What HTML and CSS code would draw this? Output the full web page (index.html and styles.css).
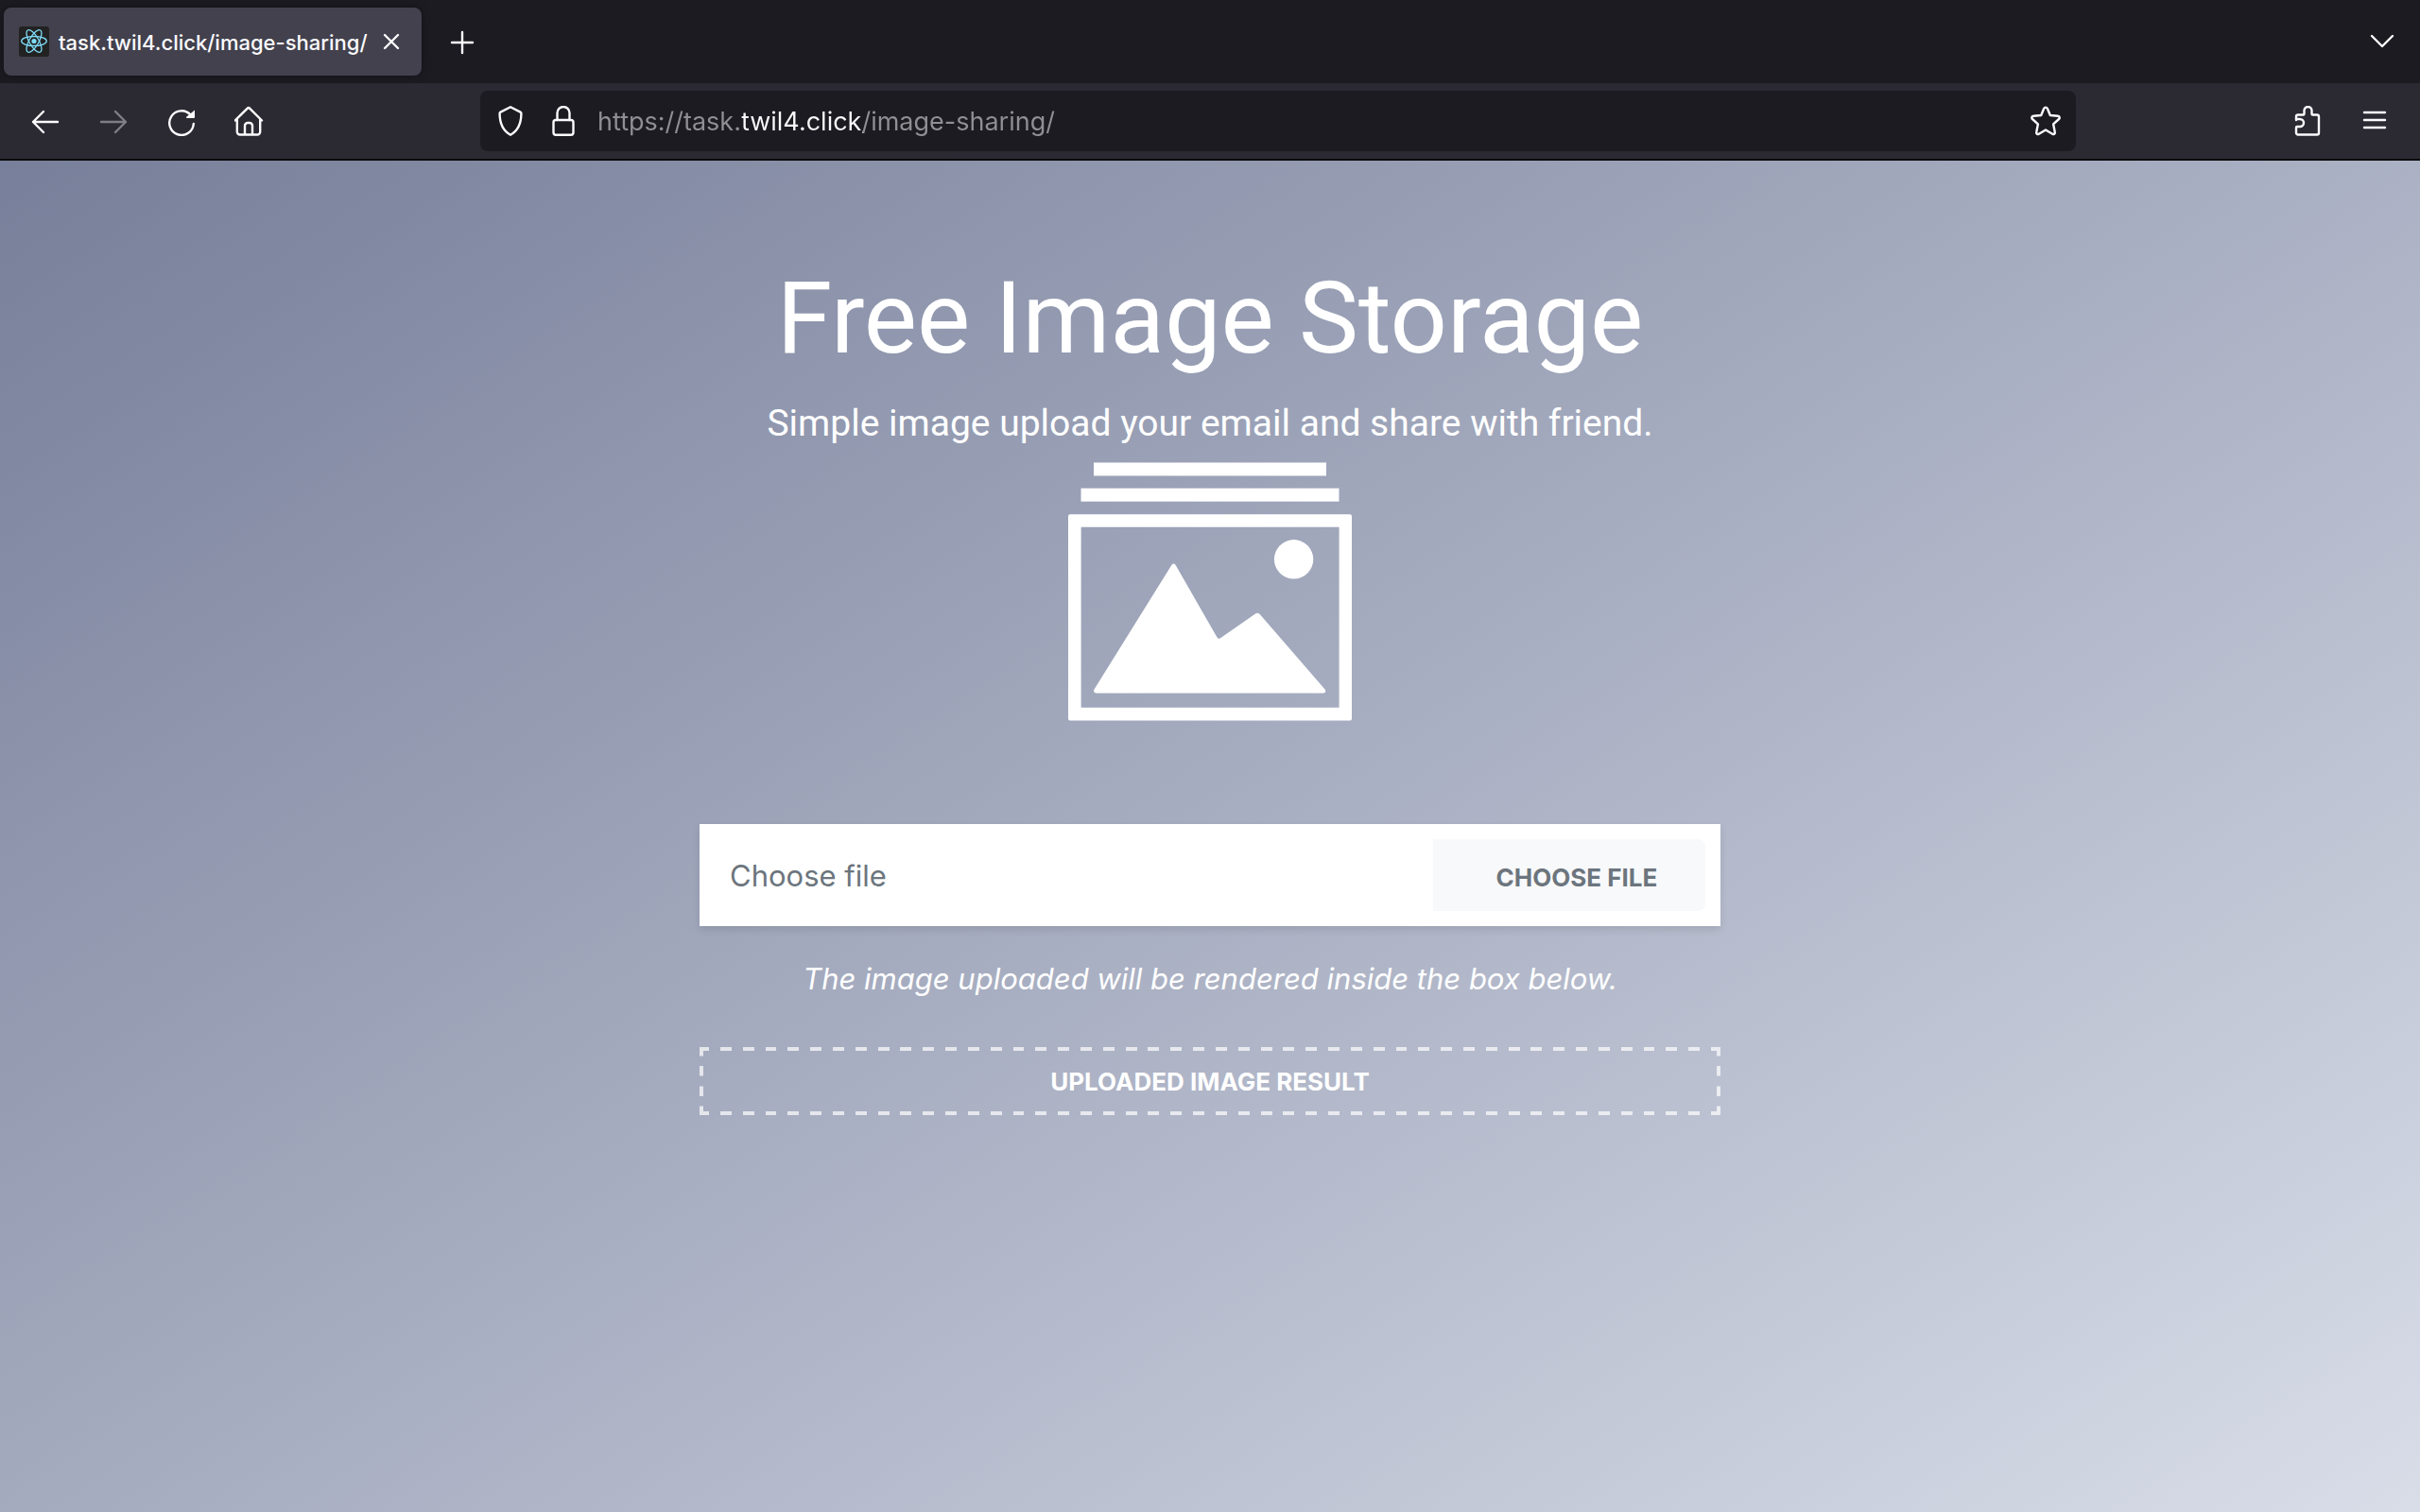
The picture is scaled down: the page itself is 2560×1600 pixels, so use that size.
FILE: index.html
```html
<!DOCTYPE html>
<html lang="en">
<head>
<meta charset="utf-8">
<meta name="viewport" content="width=device-width, initial-scale=1">
<title>Free Image Storage</title>
<link rel="stylesheet" href="styles.css">
</head>
<body>
<div class="browser">
  <header class="chrome">
    <div class="tabstrip">
      <div class="tab">
        <svg class="favicon" viewBox="0 0 32 32" aria-hidden="true">
          <rect width="32" height="32" rx="3" fill="#222"/>
          <g fill="none" stroke="#7fdcf7" stroke-width="1.3">
            <ellipse cx="16" cy="15.5" rx="13.3" ry="5"/>
            <ellipse cx="16" cy="15.5" rx="13.3" ry="5" transform="rotate(60 16 15.5)"/>
            <ellipse cx="16" cy="15.5" rx="13.3" ry="5" transform="rotate(120 16 15.5)"/>
          </g>
          <circle cx="16" cy="15.5" r="2.6" fill="#7fdcf7"/>
        </svg>
        <span class="tab-title">task.twil4.click/image-sharing/</span>
        <button class="tab-close" type="button" aria-label="Close tab">
          <svg class="icon" viewBox="0 0 32 32"><path d="M9 9l14 14M23 9L9 23"/></svg>
        </button>
      </div>
      <button class="tool" type="button" aria-label="New tab">
        <svg class="icon" viewBox="0 0 32 32"><path d="M16 6v22M5 17h22"/></svg>
      </button>
      <button class="tool tool-end" type="button" aria-label="List all tabs">
        <svg class="icon" viewBox="0 0 32 32"><path d="M5 10l11 11 11-11"/></svg>
      </button>
    </div>
    <nav class="toolbar" aria-label="Navigation">
      <button class="tool" type="button" aria-label="Back">
        <svg class="icon" viewBox="0 0 32 32"><path d="M29 17H3M14 6L3 17l11 11"/></svg>
      </button>
      <button class="tool" type="button" aria-label="Forward" disabled>
        <svg class="icon" viewBox="0 0 32 32"><path d="M3 17h26M18 6l11 11-11 11"/></svg>
      </button>
      <button class="tool" type="button" aria-label="Reload">
        <svg class="icon" viewBox="0 0 32 32"><path d="M25.5 9.500A12.800 12.800 0 1 0 28.800 19"/><path class="solid" d="M30 4.500v7.500a1 1 0 0 1-1 1h-7.300a.8.8 0 0 1-.6-1.300z"/></svg>
      </button>
      <button class="tool" type="button" aria-label="Home">
        <svg class="icon" viewBox="0 0 32 32"><path d="M.8 15.500L13.500 2.800a2 2 0 0 1 2.800 0L29 15.500M2.800 14v13.500a3 3 0 0 0 3 3h18.400a3 3 0 0 0 3-3V14M11 30v-9a3 3 0 0 1 3-3h2a3 3 0 0 1 3 3v9"/></svg>
      </button>
      <div class="urlbar">
        <svg class="icon" viewBox="0 0 32 32" role="img" aria-label="Tracking protection"><path d="M16 1.300l10.500 5.300a1.600 1.600 0 0 1 .9 1.500C27.400 19 24 26.500 16 30.700 8 26.500 4.600 19 4.600 8.100a1.600 1.600 0 0 1 .9-1.500z"/></svg>
        <svg class="icon" viewBox="0 0 32 32" role="img" aria-label="Secure connection"><path d="M9.500 15V7.500a6.500 6.500 0 0 1 13 0V15"/><rect x="5.500" y="15" width="21" height="15.700" rx="2.500"/></svg>
        <input class="url" type="text" aria-label="Address" value="https://task.twil4.click/image-sharing/">
        <button class="bookmark" type="button" aria-label="Bookmark this page">
          <svg class="icon" viewBox="0 0 32 32"><path d="M14.200 2.800a2 2 0 0 1 3.600 0l3 7.200 8.200.8a1.800 1.800 0 0 1 1 3.200l-5.900 5.300 1.700 8.600a1.700 1.700 0 0 1-2.600 1.800L16 25.500l-7.200 4.200a1.700 1.700 0 0 1-2.600-1.800l1.700-8.600L2 14a1.800 1.800 0 0 1 1-3.200l8.200-.8z"/></svg>
        </button>
      </div>
      <button class="tool" type="button" aria-label="Extensions">
        <svg class="icon" viewBox="0 0 32 32"><path d="M5 15V11.500a2 2 0 0 1 2-2h5.500a1 1 0 0 0 1-1V5a4 4 0 0 1 8 0v3.500a1 1 0 0 0 1 1H27a2 2 0 0 1 2 2v17a2 2 0 0 1-2 2H7a2 2 0 0 1-2-2v-5.500a1 1 0 0 1 1-1h3a3.500 3.500 0 0 0 0-8H5z"/></svg>
      </button>
      <button class="tool" type="button" aria-label="Open application menu">
        <svg class="icon" viewBox="0 0 32 32"><path d="M5 7h22M5 15h22M5 23h22"/></svg>
      </button>
    </nav>
  </header>

  <main class="page">
    <div class="container">
      <h1 class="title">Free Image Storage</h1>
      <p class="lead">Simple image upload your email and share with friend.</p>
      <svg class="picture" viewBox="0 0 300 300" role="img" aria-label="Stack of pictures">
        <rect x="27" y="13.500" width="246" height="14"/>
        <rect x="13.500" y="40.700" width="273" height="14"/>
        <path fill-rule="evenodd" d="M2 68.200h296a2 2 0 0 1 2 2v214.300a2 2 0 0 1-2 2H2a2 2 0 0 1-2-2V70.200a2 2 0 0 1 2-2zM13.600 81.700v191h273v-191z"/>
        <circle cx="238.600" cy="115.800" r="20.700"/>
        <path d="M109.500 121.800q2-2.800 4 0l44 76.800q1.500 2.200 3.500.6l37-25.800q2.500-1.500 4.500.4l69.300 80q1.500 3.700-2 3.700H29.500q-3.500-.4-2-4z"/>
      </svg>
      <form class="upload">
        <label class="upload-name" for="file">Choose file</label>
        <label class="upload-button" for="file">Choose file</label>
        <input class="upload-input" id="file" type="file" accept="image/*">
      </form>
      <p class="hint">The image uploaded will be rendered inside the box below.</p>
      <div class="result">Uploaded image result</div>
    </div>
  </main>
</div>
</body>
</html>
```
FILE: styles.css
```css
*,
*::before,
*::after {
  box-sizing: border-box;
}

body {
  margin: 0;
  font-family: Inter, "Liberation Sans", sans-serif;
  color: #fff;
}

.browser {
  display: flex;
  flex-direction: column;
  min-height: 100vh;
}

/* Browser chrome */

.chrome {
  border-bottom: 2px solid #0c0c0d;
  background: #2b2a33;
  color: #fbfbfe;
}

.tabstrip {
  display: flex;
  align-items: center;
  height: 88px;
  padding: 0 4px;
  background: #1c1b22;
}

.tab {
  display: flex;
  align-items: center;
  width: 442px;
  height: 72px;
  padding: 0 16px;
  border-radius: 8px;
  background: #42414d;
  box-shadow: 0 0 8px rgba(0, 0, 0, 0.4);
}

.favicon {
  flex: none;
  width: 32px;
  height: 32px;
  margin-right: 10px;
}

.tab-title {
  flex: 1;
  padding-top: 2px;
  font-size: 22px;
  font-weight: 500;
  line-height: 32px;
  white-space: nowrap;
}

.tab-close,
.tool,
.bookmark {
  display: flex;
  flex: none;
  align-items: center;
  justify-content: center;
  padding: 0;
  border: 0;
  background: none;
  color: inherit;
}

.tab-close {
  width: 32px;
  height: 48px;
}

.tool {
  width: 72px;
  height: 64px;
}

.tool:disabled {
  opacity: 0.4;
}

.tabstrip .tool {
  margin-left: 7px;
}

.tabstrip .tool-end {
  margin-left: auto;
}

.icon {
  flex: none;
  width: 32px;
  height: 32px;
  fill: none;
  stroke: currentColor;
  stroke-width: 2.4;
  stroke-linecap: round;
  stroke-linejoin: round;
}

.icon .solid {
  fill: currentColor;
  stroke: none;
}

.toolbar {
  display: flex;
  align-items: center;
  height: 80px;
  padding: 0 12px;
}

.urlbar {
  display: flex;
  flex: 1;
  align-items: center;
  gap: 24px;
  height: 64px;
  margin: 0 208px;
  padding: 0 16px;
  border-radius: 8px;
  background: #1c1b22;
}

/* The host name is brighter than the rest of the address. */
.url {
  flex: 1;
  min-width: 0;
  margin-left: -4px;
  padding: 2px 0 0;
  border: 0;
  outline: 0;
  background: linear-gradient(to right, #8f8f94 153px, #fbfbfe 153px 281px, #8f8f94 281px);
  -webkit-background-clip: text;
  background-clip: text;
  color: transparent;
  font-family: inherit;
  font-size: 27px;
  line-height: 40px;
}

/* Page */

.page {
  flex: 1;
  padding: 96px 32px;
  background: linear-gradient(147deg, #777f9a 0%, #d8dde8 100%);
}

.container {
  max-width: 1080px;
  margin: 0 auto;
  text-align: center;
}

.title,
.lead {
  font-family: Roboto, Inter, sans-serif;
  font-weight: 400;
}

.title {
  margin: 0 0 12px;
  padding-top: 4px;
  font-size: 106px;
  line-height: 134px;
}

.lead {
  margin: 0;
  padding-top: 4px;
  font-size: 39px;
  line-height: 56px;
}

.picture {
  display: block;
  width: 300px;
  height: 300px;
  margin: 0 auto 96px;
  fill: #fff;
}

.upload {
  display: flex;
  align-items: center;
  position: relative;
  padding: 16px;
  background: #fff;
  box-shadow: 0 4px 8px rgba(0, 0, 0, 0.1);
  color: #6c757d;
}

.upload-name {
  flex: 1;
  padding: 2px 16px 0;
  font-size: 31px;
  line-height: 48px;
  text-align: left;
}

.upload-button {
  width: 288px;
  padding: 21px 50px 15px 66px;
  border-radius: 0 8px 8px 0;
  background: #f8f9fa;
  font-size: 26px;
  font-weight: 700;
  line-height: 40px;
  text-transform: uppercase;
  white-space: nowrap;
}

.upload-input {
  position: absolute;
  inset: 0;
  width: 100%;
  opacity: 0;
}

.hint {
  margin: 32px 0 48px;
  font-size: 31px;
  font-style: italic;
  line-height: 48px;
}

.result {
  border: 4px solid transparent;
  border-image: url("data:image/svg+xml,%3Csvg xmlns='http://www.w3.org/2000/svg' width='32' height='32'%3E%3Cpath fill='white' fill-opacity='.7' d='M0 0h10v4H4v6H0zM22 0h10v10h-4V4h-6zM0 22h4v6h6v4H0zM28 22h4v10H22v-4h6z'/%3E%3C/svg%3E") 4 round;
  padding: 13px 32px 11px;
  font-size: 26px;
  font-weight: 700;
  line-height: 40px;
  text-transform: uppercase;
}
```
